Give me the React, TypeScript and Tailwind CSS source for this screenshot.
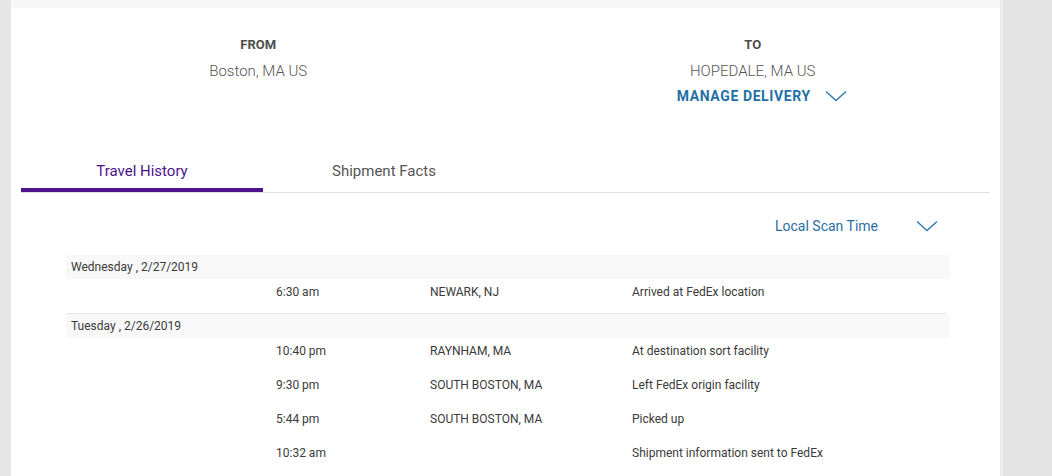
import React from 'react';

// ─── Data ──────────────────────────────────────────────────────────────────────

type Scan = { time: string; location: string; status: string };
type Day = { label: string; scans: Scan[] };

const HISTORY: Day[] = [
  {
    label: 'Wednesday , 2/27/2019',
    scans: [{ time: '6:30 am', location: 'NEWARK, NJ', status: 'Arrived at FedEx location' }],
  },
  {
    label: 'Tuesday , 2/26/2019',
    scans: [
      { time: '10:40 pm', location: 'RAYNHAM, MA', status: 'At destination sort facility' },
      { time: '9:30 pm', location: 'SOUTH BOSTON, MA', status: 'Left FedEx origin facility' },
      { time: '5:44 pm', location: 'SOUTH BOSTON, MA', status: 'Picked up' },
      { time: '10:32 am', location: '', status: 'Shipment information sent to FedEx' },
    ],
  },
];

// ─── Sub-components ────────────────────────────────────────────────────────────

function Chevron() {
  return (
    <svg width="22" height="12" viewBox="0 0 22 12" fill="none" className="flex-shrink-0">
      <polyline points="1,1.5 11,10.5 21,1.5" stroke="#2b7bb3" strokeWidth="1.4" />
    </svg>
  );
}

function DayGroup({ day, last }: { day: Day; last: boolean }) {
  return (
    <div>
      <div className="h-[24px] leading-[24px] bg-[#f8f8f8] pl-[5px] text-[12px] text-[#3a3a3a]">
        {day.label}
      </div>
      {day.scans.map(scan => (
        <div
          key={scan.time}
          className="grid grid-cols-[210px_154px_202px_1fr] h-[34px] pt-[5px] text-[12px] leading-[16px] text-[#3a3a3a]"
        >
          <span />
          <span>{scan.time}</span>
          <span>{scan.location}</span>
          <span>{scan.status}</span>
        </div>
      ))}
      {!last && <div className="h-px mr-[4px] bg-[#e4e4e4]" />}
    </div>
  );
}

// ─── Main component ────────────────────────────────────────────────────────────

export default function App() {
  return (
    <div className="flex h-[476px] overflow-hidden font-['Roboto',sans-serif]">
      <div className="w-[11px] flex-shrink-0 bg-[#e6e6e6]" />

      <main className="w-[989px] flex-shrink-0 bg-white">
        <div className="h-[8px] bg-[#f7f7f7]" />

        {/* From / To */}
        <div className="grid grid-cols-2 pt-[29px] text-center">
          <div>
            <p className="text-[13px] leading-[16px] font-bold text-[#4d4d4d]">FROM</p>
            <p className="mt-[8px] text-[15px] leading-[20px] font-light text-[#555]">Boston, MA US</p>
          </div>
          <div>
            <p className="text-[13px] leading-[16px] font-bold text-[#4d4d4d]">TO</p>
            <p className="mt-[8px] text-[15px] leading-[20px] font-light text-[#555]">HOPEDALE, MA US</p>
            <button className="mt-[6px] ml-[18px] inline-flex items-center gap-[14px] h-[18px]">
              <span className="text-[14px] leading-[18px] font-bold tracking-[0.6px] text-[#1f70a6]">
                MANAGE DELIVERY
              </span>
              <Chevron />
            </button>
          </div>
        </div>

        {/* Tabs */}
        <div className="mx-[10px] mt-[53px] flex border-b border-[#dedede]">
          <div className="w-[242px] text-center text-[15px] leading-[20px] text-[#4d148c] pb-[7px] border-b-4 border-[#4d148c]">
            Travel History
          </div>
          <div className="w-[242px] text-center text-[15px] leading-[20px] text-[#555] pb-[11px]">
            Shipment Facts
          </div>
        </div>

        {/* Time zone selector */}
        <div className="mt-[23px] flex justify-end pr-[62px]">
          <button className="flex items-center gap-[38px] h-[20px]">
            <span className="text-[14px] leading-[20px] text-[#2a6ea5]">Local Scan Time</span>
            <Chevron />
          </button>
        </div>

        {/* Travel history */}
        <div className="mt-[19px] ml-[55px] w-[884px]">
          {HISTORY.map((day, i) => (
            <DayGroup key={day.label} day={day} last={i === HISTORY.length - 1} />
          ))}
        </div>
      </main>

      <div className="flex-1 bg-[#e3e3e3] border-l-[3px] border-[#ececec]" />
    </div>
  );
}
